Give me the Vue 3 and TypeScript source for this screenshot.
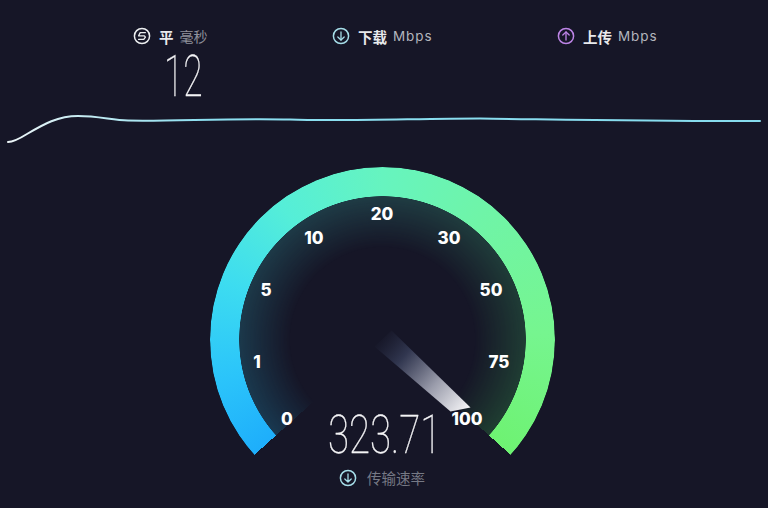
<template>
  <div class="speedtest">
    <!-- top stats -->
    <header class="stats">
      <div v-for="stat in stats" :key="stat.id" class="stat" :class="stat.id">
        <div class="stat-head">
          <svg class="stat-icon" viewBox="0 0 18 18" fill="none">
            <circle cx="9" cy="9" r="7.6" stroke-width="1.5" />
            <path v-for="(d, i) in stat.paths" :key="i" :d="d" stroke-width="1.3" stroke-linecap="round" stroke-linejoin="round" />
          </svg>
          <span class="stat-name">{{ stat.name }}</span>
          <span class="stat-unit">{{ stat.unit }}</span>
        </div>
        <div v-if="stat.value" class="stat-value"><span>{{ stat.value }}</span></div>
      </div>
    </header>

    <!-- speed history -->
    <svg class="history" viewBox="0 0 768 56" fill="none">
      <defs>
        <linearGradient id="lineColor" x1="0" y1="0" x2="1" y2="0">
          <stop offset="0" stop-color="#eef6f8" />
          <stop offset="0.1" stop-color="#c5ebf2" />
          <stop offset="0.26" stop-color="#8cdff0" />
          <stop offset="1" stop-color="#86dcee" />
        </linearGradient>
      </defs>
      <path
        d="M8 42 C13 42 19 39 27 34 C44 24 58 16 78 16 C98 16 112 20 128 20.5 C170 21.5 230 18 290 19.5 C340 21.5 420 18.5 480 18.5 C560 19.5 660 21.5 760 21"
        stroke="url(#lineColor)"
        stroke-width="2"
        stroke-linecap="round"
      />
    </svg>

    <!-- gauge -->
    <main class="gauge">
      <div class="glow"></div>
      <div class="ring"></div>
      <svg class="needle" viewBox="0 0 345 345">
        <defs>
          <linearGradient id="needleFade" gradientUnits="userSpaceOnUse" x1="-6" y1="-6" x2="84" y2="72">
            <stop offset="0.04" stop-color="#2a3048" stop-opacity="0" />
            <stop offset="0.3" stop-color="#343a54" stop-opacity="0.9" />
            <stop offset="0.65" stop-color="#9a9cab" />
            <stop offset="1" stop-color="#f6f6f8" />
          </linearGradient>
        </defs>
        <polygon points="9,-9 -8,7 68,72 88,68" fill="url(#needleFade)" transform="translate(172.5 172.5)" />
      </svg>
      <span v-for="tick in ticks" :key="tick.label" class="tick" :style="tick.style">{{ tick.label }}</span>
      <div class="readout"><span>323.71</span></div>
      <div class="caption">
        <svg class="stat-icon" viewBox="0 0 18 18" fill="none">
          <circle cx="9" cy="9" r="7.6" stroke-width="1.5" />
          <path d="M9 5v8M5.8 10 9 13l3.2-3" stroke-width="1.3" stroke-linecap="round" stroke-linejoin="round" />
        </svg>
        <span>传输速率</span>
      </div>
    </main>
  </div>
</template>

<script setup lang="ts">
interface Stat {
  id: string
  name: string
  unit: string
  value?: string
  paths: string[]
}

const stats: Stat[] = [
  {
    id: 'ping',
    name: '平',
    unit: '毫秒',
    value: '12',
    paths: ['M12.4 5.6H7.2L5.6 8.8h5.8l1 1.4-1.6 2.2H5.6']
  },
  { id: 'down', name: '下载', unit: 'Mbps', paths: ['M9 5v8', 'M5.8 10 9 13l3.2-3'] },
  { id: 'up', name: '上传', unit: 'Mbps', paths: ['M9 13V5', 'M5.8 8 9 5l3.2 3'] }
]

// scale labels, measured from the gauge's top left corner
const scale: [string, number, number][] = [
  ['0', 77, 252],
  ['1', 47, 195],
  ['5', 56, 123],
  ['10', 104, 71],
  ['20', 172, 47],
  ['30', 239, 71],
  ['50', 281, 123],
  ['75', 289, 195],
  ['100', 257, 252]
]
const ticks = scale.map(([label, x, y]) => ({
  label,
  style: { left: `${x}px`, top: `${y}px` }
}))
</script>

<style>
html,
body {
  background: #161627;
}
</style>

<style scoped>
.speedtest {
  width: 768px;
  height: 508px;
  overflow: hidden;
  background: #161627;
  display: flex;
  flex-direction: column;
  font-family: Inter, "Noto Sans CJK SC", sans-serif;
}

.stats {
  height: 100px;
  padding: 26px 0 0 133px;
  box-sizing: border-box;
  display: grid;
  grid-template-columns: 199px 225px 1fr;
  flex: none;
}

.stat-head {
  display: flex;
  align-items: center;
  height: 20px;
}

.stat-icon {
  width: 18px;
  height: 18px;
  flex: none;
}

.ping .stat-icon {
  stroke: #eceef0;
}

.down .stat-icon,
.caption .stat-icon {
  stroke: #a5dde8;
}

.up .stat-icon {
  stroke: #bd84e6;
}

.stat-name {
  margin-left: 8px;
  font-size: 14.5px;
  font-weight: 700;
  color: #e8e9ec;
  font-family: "Noto Sans CJK SC", sans-serif;
}

.stat-unit {
  margin-left: 6px;
  font-size: 13.5px;
  letter-spacing: 0.9px;
  color: #b3b5bd;
}

.ping .stat-unit {
  font-size: 14px;
  letter-spacing: 0;
  color: #8f919b;
}

.stat-value {
  width: 60px;
  margin-top: 6px;
  padding-left: 31px;
  line-height: 50px;
  height: 50px;
  font-family: Roboto, sans-serif;
  font-weight: 100;
  font-size: 57px;
  color: #f4f4f6;
  -webkit-text-stroke: 0.3px #f4f4f6;
}

.stat-value span,
.readout span {
  display: inline-block;
  transform: scaleX(0.62);
  transform-origin: left center;
}

.history {
  width: 768px;
  height: 56px;
  flex: none;
}

.gauge {
  position: relative;
  flex: none;
  width: 345px;
  height: 345px;
  margin: 11px 0 0 210px;
}

.ring,
.glow {
  position: absolute;
  inset: 0;
  border-radius: 50%;
}

.ring {
  background: conic-gradient(
    from 228deg,
    #1eaefb 0deg,
    #2bc4fa 28deg,
    #3ddcf0 62deg,
    #55eed8 95deg,
    #66f4bf 132deg,
    #6ff4a8 170deg,
    #76f58f 220deg,
    #6ef272 264deg,
    transparent 264deg
  );
  -webkit-mask: radial-gradient(circle closest-side, transparent 143px, #000 143.6px);
  mask: radial-gradient(circle closest-side, transparent 143px, #000 143.6px);
}

.glow {
  background: conic-gradient(
    from 228deg,
    #1c5f7f 0deg,
    #24606f 60deg,
    #2a6665 132deg,
    #2a6648 200deg,
    #2a6a3c 264deg,
    transparent 264deg
  );
  -webkit-mask: radial-gradient(circle closest-side, transparent 92px, rgba(0, 0, 0, 0.5) 146px);
  mask: radial-gradient(circle closest-side, transparent 92px, rgba(0, 0, 0, 0.5) 146px);
}

.needle {
  position: absolute;
  inset: 0;
  width: 345px;
  height: 345px;
}

.tick {
  position: absolute;
  transform: translate(-50%, -50%);
  font-size: 17px;
  font-weight: 800;
  color: #fff;
  font-family: Inter, sans-serif;
}

.readout {
  position: absolute;
  left: 118px;
  top: 246px;
  height: 44px;
  line-height: 44px;
  font-family: Roboto, sans-serif;
  font-weight: 100;
  font-size: 53px;
  white-space: nowrap;
  color: #f4f4f6;
  -webkit-text-stroke: 0.3px #f4f4f6;
}

.readout span {
  transform: scaleX(0.725);
}

.caption {
  position: absolute;
  left: 129px;
  top: 302px;
  display: flex;
  align-items: center;
  gap: 10px;
  font-size: 14.5px;
  line-height: 18px;
  color: #767985;
  white-space: nowrap;
  font-family: "Noto Sans CJK SC", sans-serif;
}
</style>
